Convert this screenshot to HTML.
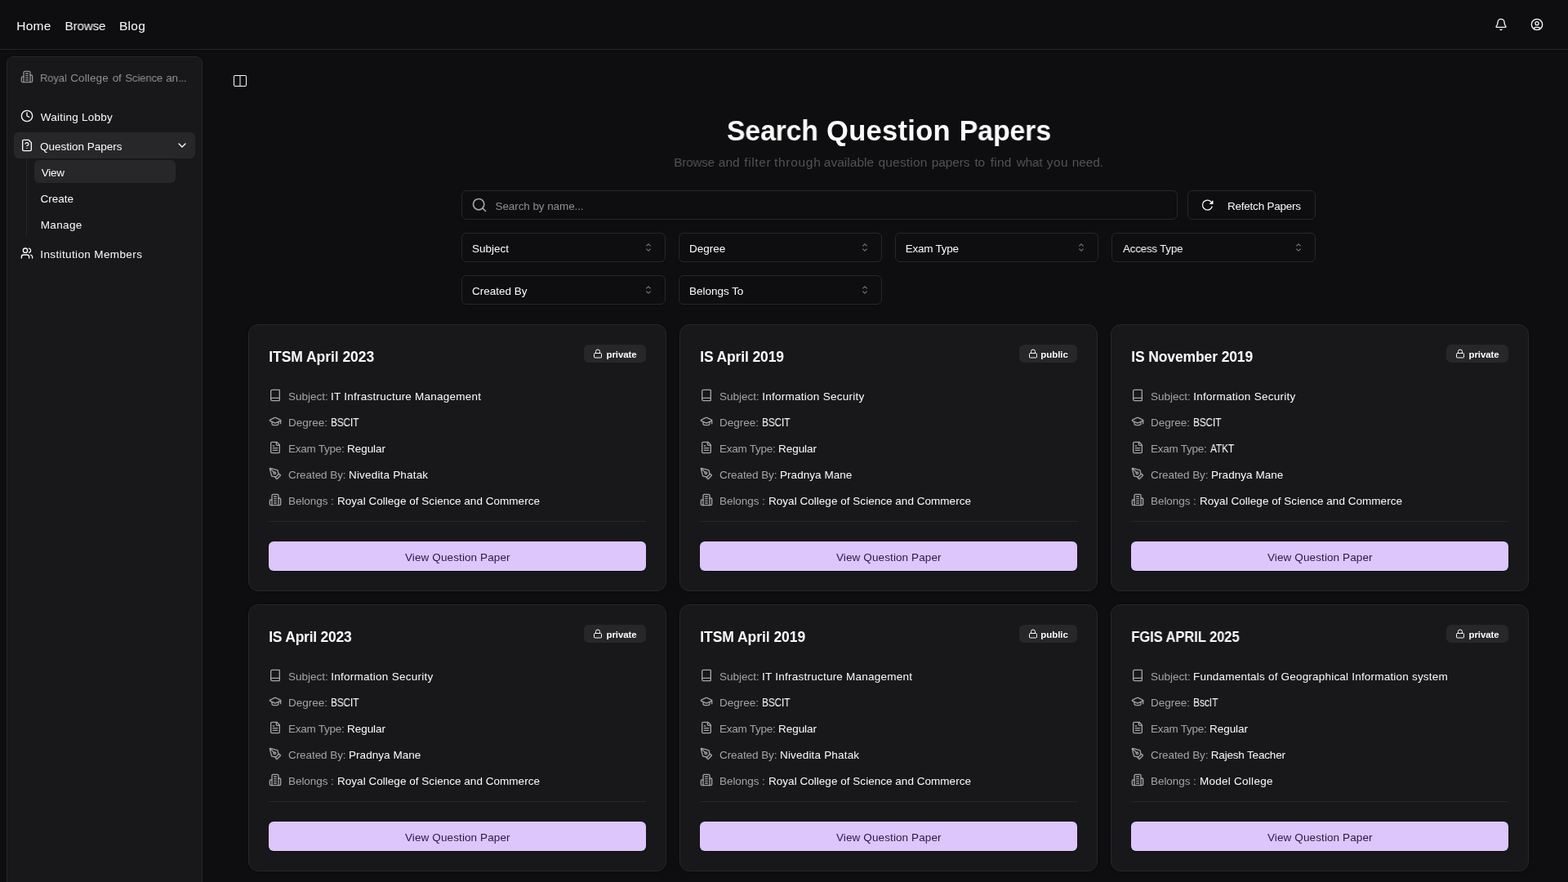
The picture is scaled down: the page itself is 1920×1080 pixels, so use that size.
<!DOCTYPE html>
<html lang="en">
<head>
<meta charset="utf-8">
<meta name="viewport" content="width=1920, initial-scale=1">
<title>Search Question Papers</title>
<style>
*{box-sizing:border-box;margin:0;padding:0}
html,body{width:1920px;height:1080px;overflow:hidden;background:#0e0e10;color:#fafafa;font-family:"Liberation Sans", Arial, Helvetica, sans-serif;-webkit-font-smoothing:antialiased}
ul{list-style:none}
a{text-decoration:none}
button{font:inherit;color:inherit;background:none;border:0;text-align:left;cursor:pointer}
.t{position:absolute;white-space:pre;line-height:30px;font-weight:400;display:block;will-change:transform;transform-origin:0 50%}
.ic{position:absolute;display:block}
.w{font-size:0;line-height:0}
.topbar{position:absolute;left:0;top:0;width:1920px;height:61px;border-bottom:1px solid #27272a;background:#0e0e10;box-shadow:0 1px 2px rgba(0,0,0,.35)}
.sidebar{position:absolute;width:240px;height:1030px;border:1px solid #27272a;border-radius:8px;background:#18181b;box-shadow:0 1px 3px rgba(0,0,0,.35)}
.sb-active{position:absolute;border-radius:6px;background:#27272a}
.sb-rail{position:absolute;width:1px;background:#27272a}
.toggle{position:absolute;width:28px;height:28px;border-radius:6px;color:#fafafa}
.field{position:absolute;height:36px;border:1px solid #27272a;border-radius:6px;background:transparent;box-shadow:0 1px 2px rgba(0,0,0,.05)}
.card{position:absolute;width:512px;height:327px;border:1px solid #27272a;border-radius:12px;background:#18181b;box-shadow:0 1px 3px rgba(0,0,0,.3)}
.badge{position:absolute;height:22px;border-radius:6px;background:#27272a}
.rule{position:absolute;height:1px;background:#27272a}
.cta{position:absolute;height:36px;border-radius:6px;background:#dcc6fc;box-shadow:0 1px 2px rgba(0,0,0,.3)}
</style>
</head>
<body>
<header class="topbar">
<nav class="nav"><a class="t" style="left:20px;top:17px;font-size:15.5px;letter-spacing:0.28px;color:#fafafa;padding-left:0.25px">Home</a> <a class="t" style="left:79px;top:17px;font-size:15.5px;letter-spacing:-0.15px;color:#fafafa;padding-left:0.5px;transform:scaleX(0.9817)">Browse</a> <a class="t" style="left:146px;top:17px;font-size:15.5px;letter-spacing:0.25px;color:#fafafa">Blog</a>
</nav>
<div class="actions"><svg class="ic" style="left:1830px;top:22px;color:#fafafa;" width="16" height="16" viewBox="0 0 24 24" fill="none" stroke="currentColor" stroke-width="2" stroke-linecap="round" stroke-linejoin="round" aria-hidden="true"><path d="M10.268 21a2 2 0 0 0 3.464 0"/><path d="M3.262 15.326A1 1 0 0 0 4 17h16a1 1 0 0 0 .74-1.673C19.41 13.956 18 12.499 18 8A6 6 0 0 0 6 8c0 4.499-1.411 5.956-2.738 7.326"/></svg><svg class="ic" style="left:1874px;top:22px;color:#fafafa;" width="16" height="16" viewBox="0 0 24 24" fill="none" stroke="currentColor" stroke-width="2" stroke-linecap="round" stroke-linejoin="round" aria-hidden="true"><circle cx="12" cy="12" r="10"/><circle cx="12" cy="10" r="3"/><path d="M7 20.662V19a2 2 0 0 1 2-2h6a2 2 0 0 1 2 2v1.662"/></svg></div>
</header>
<aside class="sidebar" style="left:8px;top:69px">
<div class="sb-head"><svg class="ic" style="left:16px;top:16px;color:#8f8f8f;" width="16" height="16" viewBox="0 0 24 24" fill="none" stroke="currentColor" stroke-width="2" stroke-linecap="round" stroke-linejoin="round" aria-hidden="true"><path d="M6 22V4a2 2 0 0 1 2-2h8a2 2 0 0 1 2 2v18Z"/><path d="M6 12H4a2 2 0 0 0-2 2v6a2 2 0 0 0 2 2h2"/><path d="M18 9h2a2 2 0 0 1 2 2v9a2 2 0 0 1-2 2h-2"/><path d="M10 6h4"/><path d="M10 10h4"/><path d="M10 14h4"/><path d="M10 18h4"/></svg><span class="w"><span class="t" style="left:40px;top:11px;font-size:13.5px;letter-spacing:-0.15px;color:#8f8f8f;transform:scaleX(0.9645)">Royal</span> <span class="t" style="left:77px;top:11px;font-size:13.5px;letter-spacing:0.11px;color:#8f8f8f;padding-left:0.25px">College</span> <span class="t" style="left:128px;top:11px;font-size:13.5px;letter-spacing:-0.2px;color:#8f8f8f;padding-left:0.75px">of</span> <span class="t" style="left:144px;top:11px;font-size:13.5px;letter-spacing:-0.15px;color:#8f8f8f;padding-left:0.25px;transform:scaleX(0.9767)">Science</span> <span class="t" style="left:194px;top:11px;font-size:13.5px;letter-spacing:-0.15px;color:#8f8f8f;padding-left:0.25px;transform:scaleX(0.9844)">an</span><span class="t" style="left:209px;top:11px;font-size:13.5px;letter-spacing:-0.15px;color:#8f8f8f;padding-left:0.5px;transform:scaleX(0.9095)">...</span></span></div>
<ul class="sb-menu">
<li><svg class="ic" style="left:16px;top:64px;color:#fafafa;" width="16" height="16" viewBox="0 0 24 24" fill="none" stroke="currentColor" stroke-width="2" stroke-linecap="round" stroke-linejoin="round" aria-hidden="true"><circle cx="12" cy="12" r="10"/><path d="M12 6v6l4 2"/></svg><span class="t" style="left:40px;top:59px;font-size:13.5px;letter-spacing:0.25px;color:#fafafa;padding-left:0.75px">Waiting Lobby</span></li>
<li><div class="sb-active" style="left:8px;top:92px;width:222px;height:32px"></div><svg class="ic" style="left:16px;top:100px;color:#fafafa;" width="16" height="16" viewBox="0 0 24 24" fill="none" stroke="currentColor" stroke-width="2" stroke-linecap="round" stroke-linejoin="round" aria-hidden="true"><path d="M12 17h.01"/><path d="M15 2H6a2 2 0 0 0-2 2v16a2 2 0 0 0 2 2h12a2 2 0 0 0 2-2V7z"/><path d="M9.1 9a3 3 0 0 1 5.82 1c0 2-3 3-3 3"/></svg><span class="t" style="left:40px;top:95px;font-size:13.5px;letter-spacing:-0.01px;color:#fafafa">Question Papers</span><svg class="ic" style="left:206px;top:100px;color:#fafafa;" width="16" height="16" viewBox="0 0 24 24" fill="none" stroke="currentColor" stroke-width="2" stroke-linecap="round" stroke-linejoin="round" aria-hidden="true"><path d="m6 9 6 6 6-6"/></svg>
<ul class="sb-sub">
<li class="sb-rail" style="left:23px;top:124px;height:96px"></li>
<li><div class="sb-active" style="left:33px;top:126px;width:173px;height:28px"></div><span class="t" style="left:41px;top:127px;font-size:13.5px;letter-spacing:-0.29px;color:#fafafa;padding-left:0.75px">View</span></li>
<li><span class="t" style="left:40px;top:159px;font-size:13.5px;letter-spacing:0.01px;color:#fafafa;padding-left:0.5px">Create</span></li>
<li><span class="t" style="left:40px;top:191px;font-size:13.5px;letter-spacing:0.35px;color:#fafafa;padding-left:0.75px">Manage</span></li>
</ul></li>
<li><svg class="ic" style="left:16px;top:232px;color:#fafafa;" width="16" height="16" viewBox="0 0 24 24" fill="none" stroke="currentColor" stroke-width="2" stroke-linecap="round" stroke-linejoin="round" aria-hidden="true"><path d="M16 21v-2a4 4 0 0 0-4-4H6a4 4 0 0 0-4 4v2"/><circle cx="9" cy="7" r="4"/><path d="M22 21v-2a4 4 0 0 0-3-3.87"/><path d="M16 3.13a4 4 0 0 1 0 7.75"/></svg><span class="t" style="left:40px;top:227px;font-size:13.5px;letter-spacing:0.38px;color:#fafafa;padding-left:0.25px">Institution Members</span></li>
</ul>
</aside>
<main>
<button class="toggle" style="left:280px;top:85px"><svg class="ic" style="left:6px;top:6px" width="16" height="16" viewBox="0 0 16 16" aria-hidden="true"><path fill="currentColor" d="M0 3a2 2 0 0 1 2-2h12a2 2 0 0 1 2 2v10a2 2 0 0 1-2 2H2a2 2 0 0 1-2-2zm8.5-1v12H14a1 1 0 0 0 1-1V3a1 1 0 0 0-1-1zm-1 0H2a1 1 0 0 0-1 1v10a1 1 0 0 0 1 1h5.5z"/></svg></button>
<h1 class="w"><span class="t" style="left:890px;top:145px;font-size:34.5px;letter-spacing:-0.15px;color:#fafafa;transform:scaleX(0.9784);font-weight:700">Search</span> <span class="t" style="left:1012px;top:145px;font-size:34.5px;letter-spacing:0.296px;color:#fafafa;font-weight:700">Question</span> <span class="t" style="left:1174px;top:145px;font-size:34.5px;letter-spacing:-0.15px;color:#fafafa;padding-left:0.75px;transform:scaleX(0.9829);font-weight:700">Papers</span></h1>
<p class="w"><span class="t" style="left:825px;top:184px;font-size:15.5px;letter-spacing:-0.15px;color:#525257;padding-left:0.25px;transform:scaleX(0.9777)">Browse</span> <span class="t" style="left:879px;top:184px;font-size:15.5px;letter-spacing:0.02px;color:#525257;padding-left:0.75px">and</span> <span class="t" style="left:911px;top:184px;font-size:15.5px;letter-spacing:0.63px;color:#525257;padding-left:0.25px">filter</span> <span class="t" style="left:948px;top:184px;font-size:15.5px;letter-spacing:0.705px;color:#525257">through</span> <span class="t" style="left:1008px;top:184px;font-size:15.5px;letter-spacing:0.026px;color:#525257;padding-left:0.75px">available</span> <span class="t" style="left:1075px;top:184px;font-size:15.5px;letter-spacing:0.19px;color:#525257;padding-left:0.5px">question</span> <span class="t" style="left:1140px;top:184px;font-size:15.5px;letter-spacing:-0.15px;color:#525257;padding-left:0.75px">papers</span> <span class="t" style="left:1193px;top:184px;font-size:15.5px;letter-spacing:-0.2px;color:#525257;padding-left:0.5px">to</span> <span class="t" style="left:1212px;top:184px;font-size:15.5px;letter-spacing:0.25px;color:#525257;padding-left:0.75px">find</span> <span class="t" style="left:1244px;top:184px;font-size:15.5px;letter-spacing:-0.15px;color:#525257;padding-left:0.75px;transform:scaleX(0.9846)">what</span> <span class="t" style="left:1281px;top:184px;font-size:15.5px;letter-spacing:0.38px;color:#525257;padding-left:0.75px">you</span> <span class="t" style="left:1312px;top:184px;font-size:15.5px;letter-spacing:-0.16px;color:#525257;padding-left:0.75px">need.</span></p>
<div class="field" style="left:565px;top:233px;width:877px"><svg class="ic" style="left:11px;top:7px;color:#a3a3a3;" width="20" height="20" viewBox="0 0 24 24" fill="none" stroke="currentColor" stroke-width="2" stroke-linecap="round" stroke-linejoin="round" aria-hidden="true"><circle cx="11" cy="11" r="8"/><path d="m21 21-4.3-4.3"/></svg><span class="t" style="left:40px;top:4px;font-size:13.5px;letter-spacing:-0.09px;color:#8e8e8e;padding-left:0.5px">Search by name...</span></div>
<button class="field" style="left:1454px;top:233px;width:157px"><svg class="ic" style="left:16px;top:9px;color:#fafafa;" width="16" height="16" viewBox="0 0 512 512" aria-hidden="true"><path d="M400 148l-21.12-24.57A191.43 191.43 0 00240 64C134 64 48 150 48 256s86 192 192 192a192.09 192.09 0 00181.07-128" fill="none" stroke="currentColor" stroke-linecap="round" stroke-miterlimit="10" stroke-width="40"/><path fill="currentColor" d="M464 97.42V208a16 16 0 01-16 16H337.42c-14.26 0-21.4-17.23-11.32-27.31L436.69 86.1C446.77 76 464 83.16 464 97.42z"/></svg><span class="t" style="left:48px;top:4px;font-size:13.5px;letter-spacing:-0.23px;color:#fafafa">Refetch Papers</span></button>
<button class="field" style="left:565px;top:285px;width:250px"><span class="t" style="left:12px;top:4px;font-size:13.5px;letter-spacing:0.01px;color:#fafafa">Subject</span><svg class="ic" style="left:220px;top:9px;opacity:.5" width="16" height="16" viewBox="0 0 15 15" fill="none" aria-hidden="true"><path fill="currentColor" fill-rule="evenodd" clip-rule="evenodd" d="M4.93179 5.43179C4.75605 5.60753 4.75605 5.89245 4.93179 6.06819C5.10753 6.24392 5.39245 6.24392 5.56819 6.06819L7.49999 4.13638L9.43179 6.06819C9.60753 6.24392 9.89245 6.24392 10.0682 6.06819C10.2439 5.89245 10.2439 5.60753 10.0682 5.43179L7.81819 3.18179C7.73379 3.0974 7.61933 3.04999 7.49999 3.04999C7.38064 3.04999 7.26618 3.0974 7.18179 3.18179L4.93179 5.43179ZM10.0682 9.56819C10.2439 9.39245 10.2439 9.10753 10.0682 8.93179C9.89245 8.75606 9.60753 8.75606 9.43179 8.93179L7.49999 10.8636L5.56819 8.93179C5.39245 8.75606 5.10753 8.75606 4.93179 8.93179C4.75605 9.10753 4.75605 9.39245 4.93179 9.56819L7.18179 11.8182C7.35753 11.9939 7.64245 11.9939 7.81819 11.8182L10.0682 9.56819Z"/></svg></button>
<button class="field" style="left:831px;top:285px;width:249px"><span class="t" style="left:12px;top:4px;font-size:13.5px;letter-spacing:-0.01px;color:#fafafa">Degree</span><svg class="ic" style="left:219px;top:9px;opacity:.5" width="16" height="16" viewBox="0 0 15 15" fill="none" aria-hidden="true"><path fill="currentColor" fill-rule="evenodd" clip-rule="evenodd" d="M4.93179 5.43179C4.75605 5.60753 4.75605 5.89245 4.93179 6.06819C5.10753 6.24392 5.39245 6.24392 5.56819 6.06819L7.49999 4.13638L9.43179 6.06819C9.60753 6.24392 9.89245 6.24392 10.0682 6.06819C10.2439 5.89245 10.2439 5.60753 10.0682 5.43179L7.81819 3.18179C7.73379 3.0974 7.61933 3.04999 7.49999 3.04999C7.38064 3.04999 7.26618 3.0974 7.18179 3.18179L4.93179 5.43179ZM10.0682 9.56819C10.2439 9.39245 10.2439 9.10753 10.0682 8.93179C9.89245 8.75606 9.60753 8.75606 9.43179 8.93179L7.49999 10.8636L5.56819 8.93179C5.39245 8.75606 5.10753 8.75606 4.93179 8.93179C4.75605 9.10753 4.75605 9.39245 4.93179 9.56819L7.18179 11.8182C7.35753 11.9939 7.64245 11.9939 7.81819 11.8182L10.0682 9.56819Z"/></svg></button>
<button class="field" style="left:1096px;top:285px;width:249px"><span class="t" style="left:11px;top:4px;font-size:13.5px;letter-spacing:-0.241px;color:#fafafa;padding-left:0.75px">Exam Type</span><svg class="ic" style="left:219px;top:9px;opacity:.5" width="16" height="16" viewBox="0 0 15 15" fill="none" aria-hidden="true"><path fill="currentColor" fill-rule="evenodd" clip-rule="evenodd" d="M4.93179 5.43179C4.75605 5.60753 4.75605 5.89245 4.93179 6.06819C5.10753 6.24392 5.39245 6.24392 5.56819 6.06819L7.49999 4.13638L9.43179 6.06819C9.60753 6.24392 9.89245 6.24392 10.0682 6.06819C10.2439 5.89245 10.2439 5.60753 10.0682 5.43179L7.81819 3.18179C7.73379 3.0974 7.61933 3.04999 7.49999 3.04999C7.38064 3.04999 7.26618 3.0974 7.18179 3.18179L4.93179 5.43179ZM10.0682 9.56819C10.2439 9.39245 10.2439 9.10753 10.0682 8.93179C9.89245 8.75606 9.60753 8.75606 9.43179 8.93179L7.49999 10.8636L5.56819 8.93179C5.39245 8.75606 5.10753 8.75606 4.93179 8.93179C4.75605 9.10753 4.75605 9.39245 4.93179 9.56819L7.18179 11.8182C7.35753 11.9939 7.64245 11.9939 7.81819 11.8182L10.0682 9.56819Z"/></svg></button>
<button class="field" style="left:1361px;top:285px;width:250px"><span class="t" style="left:13px;top:4px;font-size:13.5px;letter-spacing:-0.15px;color:#fafafa;transform:scaleX(0.9826)">Access Type</span><svg class="ic" style="left:220px;top:9px;opacity:.5" width="16" height="16" viewBox="0 0 15 15" fill="none" aria-hidden="true"><path fill="currentColor" fill-rule="evenodd" clip-rule="evenodd" d="M4.93179 5.43179C4.75605 5.60753 4.75605 5.89245 4.93179 6.06819C5.10753 6.24392 5.39245 6.24392 5.56819 6.06819L7.49999 4.13638L9.43179 6.06819C9.60753 6.24392 9.89245 6.24392 10.0682 6.06819C10.2439 5.89245 10.2439 5.60753 10.0682 5.43179L7.81819 3.18179C7.73379 3.0974 7.61933 3.04999 7.49999 3.04999C7.38064 3.04999 7.26618 3.0974 7.18179 3.18179L4.93179 5.43179ZM10.0682 9.56819C10.2439 9.39245 10.2439 9.10753 10.0682 8.93179C9.89245 8.75606 9.60753 8.75606 9.43179 8.93179L7.49999 10.8636L5.56819 8.93179C5.39245 8.75606 5.10753 8.75606 4.93179 8.93179C4.75605 9.10753 4.75605 9.39245 4.93179 9.56819L7.18179 11.8182C7.35753 11.9939 7.64245 11.9939 7.81819 11.8182L10.0682 9.56819Z"/></svg></button>
<button class="field" style="left:565px;top:337px;width:250px"><span class="t" style="left:12px;top:4px;font-size:13.5px;letter-spacing:-0.01px;color:#fafafa">Created By</span><svg class="ic" style="left:220px;top:9px;opacity:.5" width="16" height="16" viewBox="0 0 15 15" fill="none" aria-hidden="true"><path fill="currentColor" fill-rule="evenodd" clip-rule="evenodd" d="M4.93179 5.43179C4.75605 5.60753 4.75605 5.89245 4.93179 6.06819C5.10753 6.24392 5.39245 6.24392 5.56819 6.06819L7.49999 4.13638L9.43179 6.06819C9.60753 6.24392 9.89245 6.24392 10.0682 6.06819C10.2439 5.89245 10.2439 5.60753 10.0682 5.43179L7.81819 3.18179C7.73379 3.0974 7.61933 3.04999 7.49999 3.04999C7.38064 3.04999 7.26618 3.0974 7.18179 3.18179L4.93179 5.43179ZM10.0682 9.56819C10.2439 9.39245 10.2439 9.10753 10.0682 8.93179C9.89245 8.75606 9.60753 8.75606 9.43179 8.93179L7.49999 10.8636L5.56819 8.93179C5.39245 8.75606 5.10753 8.75606 4.93179 8.93179C4.75605 9.10753 4.75605 9.39245 4.93179 9.56819L7.18179 11.8182C7.35753 11.9939 7.64245 11.9939 7.81819 11.8182L10.0682 9.56819Z"/></svg></button>
<button class="field" style="left:831px;top:337px;width:249px"><span class="t" style="left:12px;top:4px;font-size:13.5px;letter-spacing:-0.02px;color:#fafafa">Belongs To</span><svg class="ic" style="left:219px;top:9px;opacity:.5" width="16" height="16" viewBox="0 0 15 15" fill="none" aria-hidden="true"><path fill="currentColor" fill-rule="evenodd" clip-rule="evenodd" d="M4.93179 5.43179C4.75605 5.60753 4.75605 5.89245 4.93179 6.06819C5.10753 6.24392 5.39245 6.24392 5.56819 6.06819L7.49999 4.13638L9.43179 6.06819C9.60753 6.24392 9.89245 6.24392 10.0682 6.06819C10.2439 5.89245 10.2439 5.60753 10.0682 5.43179L7.81819 3.18179C7.73379 3.0974 7.61933 3.04999 7.49999 3.04999C7.38064 3.04999 7.26618 3.0974 7.18179 3.18179L4.93179 5.43179ZM10.0682 9.56819C10.2439 9.39245 10.2439 9.10753 10.0682 8.93179C9.89245 8.75606 9.60753 8.75606 9.43179 8.93179L7.49999 10.8636L5.56819 8.93179C5.39245 8.75606 5.10753 8.75606 4.93179 8.93179C4.75605 9.10753 4.75605 9.39245 4.93179 9.56819L7.18179 11.8182C7.35753 11.9939 7.64245 11.9939 7.81819 11.8182L10.0682 9.56819Z"/></svg></button>
<section class="grid">
<article class="card" style="left:304px;top:397px">
<h3 class="t" style="left:24px;top:24px;font-size:17.5px;letter-spacing:-0.05px;color:#fafafa;padding-left:0.25px;font-weight:700">ITSM April 2023</h3>
<div class="badge" style="left:410px;top:24px;width:76px"><svg class="ic" style="left:11px;top:5px;color:#fafafa;" width="12" height="12" viewBox="0 0 24 24" fill="none" stroke="currentColor" stroke-width="2" stroke-linecap="round" stroke-linejoin="round" aria-hidden="true"><rect width="18" height="11" x="3" y="11" rx="2" ry="2"/><path d="M7 11V7a5 5 0 0 1 10 0v4"/></svg><span class="t" style="left:27px;top:-3px;font-size:11.5px;letter-spacing:-0.085px;color:#fafafa;padding-left:0.5px;font-weight:700">private</span></div>
<ul class="meta">
<li><svg class="ic" style="left:24px;top:78px;color:#a3a3a3;" width="16" height="16" viewBox="0 0 24 24" fill="none" stroke="currentColor" stroke-width="2" stroke-linecap="round" stroke-linejoin="round" aria-hidden="true"><path d="M4 19.5v-15A2.5 2.5 0 0 1 6.5 2H19a1 1 0 0 1 1 1v18a1 1 0 0 1-1 1H6.5a1 1 0 0 1 0-5H20"/></svg><span class="t" style="left:48px;top:73px;font-size:13.5px;letter-spacing:0.006px;color:#a3a3a3">Subject:</span> <span class="t" style="left:100px;top:73px;font-size:13.5px;letter-spacing:0.24px;color:#fafafa">IT Infrastructure Management</span></li>
<li><svg class="ic" style="left:24px;top:110px;color:#a3a3a3;" width="16" height="16" viewBox="0 0 24 24" fill="none" stroke="currentColor" stroke-width="2" stroke-linecap="round" stroke-linejoin="round" aria-hidden="true"><path d="M21.42 10.922a1 1 0 0 0-.019-1.838L12.83 5.18a2 2 0 0 0-1.66 0L2.6 9.08a1 1 0 0 0 0 1.832l8.57 3.908a2 2 0 0 0 1.66 0z"/><path d="M22 10v6"/><path d="M6 12.5V16a6 3 0 0 0 12 0v-3.5"/></svg><span class="t" style="left:48px;top:105px;font-size:13.5px;letter-spacing:0.01px;color:#a3a3a3">Degree:</span> <span class="t" style="left:100px;top:105px;font-size:13.75px;letter-spacing:-0.15px;color:#fafafa;transform:scaleX(0.8633)">BSCIT</span></li>
<li><svg class="ic" style="left:24px;top:142px;color:#a3a3a3;" width="16" height="16" viewBox="0 0 24 24" fill="none" stroke="currentColor" stroke-width="2" stroke-linecap="round" stroke-linejoin="round" aria-hidden="true"><path d="M15 2H6a2 2 0 0 0-2 2v16a2 2 0 0 0 2 2h12a2 2 0 0 0 2-2V7Z"/><path d="M14 2v4a2 2 0 0 0 2 2h4"/><path d="M10 9H8"/><path d="M16 13H8"/><path d="M16 17H8"/></svg><span class="t" style="left:48px;top:137px;font-size:13.5px;letter-spacing:-0.25px;color:#a3a3a3">Exam Type:</span> <span class="t" style="left:120px;top:137px;font-size:13.5px;letter-spacing:-0.04px;color:#fafafa">Regular</span></li>
<li><svg class="ic" style="left:24px;top:174px;color:#a3a3a3;" width="16" height="16" viewBox="0 0 24 24" fill="none" stroke="currentColor" stroke-width="2" stroke-linecap="round" stroke-linejoin="round" aria-hidden="true"><path d="M15.707 21.293a1 1 0 0 1-1.414 0l-1.586-1.586a1 1 0 0 1 0-1.414l5.586-5.586a1 1 0 0 1 1.414 0l1.586 1.586a1 1 0 0 1 0 1.414z"/><path d="m18 13-1.375-6.874a1 1 0 0 0-.746-.776L3.235 2.028a1 1 0 0 0-1.207 1.207L5.35 15.879a1 1 0 0 0 .776.746L13 18"/><path d="m2.3 2.3 7.286 7.286"/><circle cx="11" cy="11" r="2"/></svg><span class="t" style="left:48px;top:169px;font-size:13.5px;letter-spacing:-0.07px;color:#a3a3a3">Created By:</span> <span class="t" style="left:122px;top:169px;font-size:13.5px;letter-spacing:0.18px;color:#fafafa">Nivedita Phatak</span></li>
<li><svg class="ic" style="left:24px;top:206px;color:#a3a3a3;" width="16" height="16" viewBox="0 0 24 24" fill="none" stroke="currentColor" stroke-width="2" stroke-linecap="round" stroke-linejoin="round" aria-hidden="true"><path d="M6 22V4a2 2 0 0 1 2-2h8a2 2 0 0 1 2 2v18Z"/><path d="M6 12H4a2 2 0 0 0-2 2v6a2 2 0 0 0 2 2h2"/><path d="M18 9h2a2 2 0 0 1 2 2v9a2 2 0 0 1-2 2h-2"/><path d="M10 6h4"/><path d="M10 10h4"/><path d="M10 14h4"/><path d="M10 18h4"/></svg><span class="t" style="left:48px;top:201px;font-size:13.5px;letter-spacing:-0.06px;color:#a3a3a3">Belongs :</span> <span class="t" style="left:108px;top:201px;font-size:13.5px;letter-spacing:0.03px;color:#fafafa">Royal College of Science and Commerce</span></li>
</ul>
<div class="rule" style="left:24px;top:240px;width:462px"></div>
<button class="cta" style="left:24px;top:265px;width:462px"><span class="t" style="left:167px;top:5px;font-size:13.5px;letter-spacing:0.11px;color:#2a1845">View Question Paper</span></button>
</article>
<article class="card" style="left:832px;top:397px">
<h3 class="t" style="left:24px;top:24px;font-size:17.5px;letter-spacing:-0.14px;color:#fafafa;padding-left:0.25px;font-weight:700">IS April 2019</h3>
<div class="badge" style="left:415px;top:24px;width:71px"><svg class="ic" style="left:11px;top:5px;color:#fafafa;" width="12" height="12" viewBox="0 0 24 24" fill="none" stroke="currentColor" stroke-width="2" stroke-linecap="round" stroke-linejoin="round" aria-hidden="true"><rect width="18" height="11" x="3" y="11" rx="2" ry="2"/><path d="M7 11V7a5 5 0 0 1 10 0v4"/></svg><span class="t" style="left:26px;top:-3px;font-size:11.5px;letter-spacing:-0.04px;color:#fafafa;padding-left:0.25px;font-weight:700">public</span></div>
<ul class="meta">
<li><svg class="ic" style="left:24px;top:78px;color:#a3a3a3;" width="16" height="16" viewBox="0 0 24 24" fill="none" stroke="currentColor" stroke-width="2" stroke-linecap="round" stroke-linejoin="round" aria-hidden="true"><path d="M4 19.5v-15A2.5 2.5 0 0 1 6.5 2H19a1 1 0 0 1 1 1v18a1 1 0 0 1-1 1H6.5a1 1 0 0 1 0-5H20"/></svg><span class="t" style="left:48px;top:73px;font-size:13.5px;letter-spacing:0.006px;color:#a3a3a3">Subject:</span> <span class="t" style="left:100px;top:73px;font-size:13.5px;letter-spacing:0.26px;color:#fafafa;padding-left:0.25px">Information Security</span></li>
<li><svg class="ic" style="left:24px;top:110px;color:#a3a3a3;" width="16" height="16" viewBox="0 0 24 24" fill="none" stroke="currentColor" stroke-width="2" stroke-linecap="round" stroke-linejoin="round" aria-hidden="true"><path d="M21.42 10.922a1 1 0 0 0-.019-1.838L12.83 5.18a2 2 0 0 0-1.66 0L2.6 9.08a1 1 0 0 0 0 1.832l8.57 3.908a2 2 0 0 0 1.66 0z"/><path d="M22 10v6"/><path d="M6 12.5V16a6 3 0 0 0 12 0v-3.5"/></svg><span class="t" style="left:48px;top:105px;font-size:13.5px;letter-spacing:0.01px;color:#a3a3a3">Degree:</span> <span class="t" style="left:100px;top:105px;font-size:13.75px;letter-spacing:-0.15px;color:#fafafa;transform:scaleX(0.8633)">BSCIT</span></li>
<li><svg class="ic" style="left:24px;top:142px;color:#a3a3a3;" width="16" height="16" viewBox="0 0 24 24" fill="none" stroke="currentColor" stroke-width="2" stroke-linecap="round" stroke-linejoin="round" aria-hidden="true"><path d="M15 2H6a2 2 0 0 0-2 2v16a2 2 0 0 0 2 2h12a2 2 0 0 0 2-2V7Z"/><path d="M14 2v4a2 2 0 0 0 2 2h4"/><path d="M10 9H8"/><path d="M16 13H8"/><path d="M16 17H8"/></svg><span class="t" style="left:48px;top:137px;font-size:13.5px;letter-spacing:-0.25px;color:#a3a3a3">Exam Type:</span> <span class="t" style="left:120px;top:137px;font-size:13.5px;letter-spacing:-0.04px;color:#fafafa">Regular</span></li>
<li><svg class="ic" style="left:24px;top:174px;color:#a3a3a3;" width="16" height="16" viewBox="0 0 24 24" fill="none" stroke="currentColor" stroke-width="2" stroke-linecap="round" stroke-linejoin="round" aria-hidden="true"><path d="M15.707 21.293a1 1 0 0 1-1.414 0l-1.586-1.586a1 1 0 0 1 0-1.414l5.586-5.586a1 1 0 0 1 1.414 0l1.586 1.586a1 1 0 0 1 0 1.414z"/><path d="m18 13-1.375-6.874a1 1 0 0 0-.746-.776L3.235 2.028a1 1 0 0 0-1.207 1.207L5.35 15.879a1 1 0 0 0 .776.746L13 18"/><path d="m2.3 2.3 7.286 7.286"/><circle cx="11" cy="11" r="2"/></svg><span class="t" style="left:48px;top:169px;font-size:13.5px;letter-spacing:-0.08px;color:#a3a3a3">Created By:</span> <span class="t" style="left:122px;top:169px;font-size:13.5px;letter-spacing:0.05px;color:#fafafa">Pradnya Mane</span></li>
<li><svg class="ic" style="left:24px;top:206px;color:#a3a3a3;" width="16" height="16" viewBox="0 0 24 24" fill="none" stroke="currentColor" stroke-width="2" stroke-linecap="round" stroke-linejoin="round" aria-hidden="true"><path d="M6 22V4a2 2 0 0 1 2-2h8a2 2 0 0 1 2 2v18Z"/><path d="M6 12H4a2 2 0 0 0-2 2v6a2 2 0 0 0 2 2h2"/><path d="M18 9h2a2 2 0 0 1 2 2v9a2 2 0 0 1-2 2h-2"/><path d="M10 6h4"/><path d="M10 10h4"/><path d="M10 14h4"/><path d="M10 18h4"/></svg><span class="t" style="left:48px;top:201px;font-size:13.5px;letter-spacing:-0.06px;color:#a3a3a3">Belongs :</span> <span class="t" style="left:108px;top:201px;font-size:13.5px;letter-spacing:0.03px;color:#fafafa">Royal College of Science and Commerce</span></li>
</ul>
<div class="rule" style="left:24px;top:240px;width:462px"></div>
<button class="cta" style="left:24px;top:265px;width:462px"><span class="t" style="left:167px;top:5px;font-size:13.5px;letter-spacing:0.11px;color:#2a1845">View Question Paper</span></button>
</article>
<article class="card" style="left:1360px;top:397px">
<h3 class="t" style="left:24px;top:24px;font-size:17.5px;letter-spacing:-0.122px;color:#fafafa;padding-left:0.25px;font-weight:700">IS November 2019</h3>
<div class="badge" style="left:410px;top:24px;width:76px"><svg class="ic" style="left:11px;top:5px;color:#fafafa;" width="12" height="12" viewBox="0 0 24 24" fill="none" stroke="currentColor" stroke-width="2" stroke-linecap="round" stroke-linejoin="round" aria-hidden="true"><rect width="18" height="11" x="3" y="11" rx="2" ry="2"/><path d="M7 11V7a5 5 0 0 1 10 0v4"/></svg><span class="t" style="left:27px;top:-3px;font-size:11.5px;letter-spacing:-0.085px;color:#fafafa;padding-left:0.5px;font-weight:700">private</span></div>
<ul class="meta">
<li><svg class="ic" style="left:24px;top:78px;color:#a3a3a3;" width="16" height="16" viewBox="0 0 24 24" fill="none" stroke="currentColor" stroke-width="2" stroke-linecap="round" stroke-linejoin="round" aria-hidden="true"><path d="M4 19.5v-15A2.5 2.5 0 0 1 6.5 2H19a1 1 0 0 1 1 1v18a1 1 0 0 1-1 1H6.5a1 1 0 0 1 0-5H20"/></svg><span class="t" style="left:48px;top:73px;font-size:13.5px;letter-spacing:0.006px;color:#a3a3a3">Subject:</span> <span class="t" style="left:100px;top:73px;font-size:13.5px;letter-spacing:0.26px;color:#fafafa;padding-left:0.25px">Information Security</span></li>
<li><svg class="ic" style="left:24px;top:110px;color:#a3a3a3;" width="16" height="16" viewBox="0 0 24 24" fill="none" stroke="currentColor" stroke-width="2" stroke-linecap="round" stroke-linejoin="round" aria-hidden="true"><path d="M21.42 10.922a1 1 0 0 0-.019-1.838L12.83 5.18a2 2 0 0 0-1.66 0L2.6 9.08a1 1 0 0 0 0 1.832l8.57 3.908a2 2 0 0 0 1.66 0z"/><path d="M22 10v6"/><path d="M6 12.5V16a6 3 0 0 0 12 0v-3.5"/></svg><span class="t" style="left:48px;top:105px;font-size:13.5px;letter-spacing:0.01px;color:#a3a3a3">Degree:</span> <span class="t" style="left:100px;top:105px;font-size:13.75px;letter-spacing:-0.15px;color:#fafafa;transform:scaleX(0.8633)">BSCIT</span></li>
<li><svg class="ic" style="left:24px;top:142px;color:#a3a3a3;" width="16" height="16" viewBox="0 0 24 24" fill="none" stroke="currentColor" stroke-width="2" stroke-linecap="round" stroke-linejoin="round" aria-hidden="true"><path d="M15 2H6a2 2 0 0 0-2 2v16a2 2 0 0 0 2 2h12a2 2 0 0 0 2-2V7Z"/><path d="M14 2v4a2 2 0 0 0 2 2h4"/><path d="M10 9H8"/><path d="M16 13H8"/><path d="M16 17H8"/></svg><span class="t" style="left:48px;top:137px;font-size:13.5px;letter-spacing:-0.25px;color:#a3a3a3">Exam Type:</span> <span class="t" style="left:121px;top:137px;font-size:13.75px;letter-spacing:-0.15px;color:#fafafa;transform:scaleX(0.8659)">ATKT</span></li>
<li><svg class="ic" style="left:24px;top:174px;color:#a3a3a3;" width="16" height="16" viewBox="0 0 24 24" fill="none" stroke="currentColor" stroke-width="2" stroke-linecap="round" stroke-linejoin="round" aria-hidden="true"><path d="M15.707 21.293a1 1 0 0 1-1.414 0l-1.586-1.586a1 1 0 0 1 0-1.414l5.586-5.586a1 1 0 0 1 1.414 0l1.586 1.586a1 1 0 0 1 0 1.414z"/><path d="m18 13-1.375-6.874a1 1 0 0 0-.746-.776L3.235 2.028a1 1 0 0 0-1.207 1.207L5.35 15.879a1 1 0 0 0 .776.746L13 18"/><path d="m2.3 2.3 7.286 7.286"/><circle cx="11" cy="11" r="2"/></svg><span class="t" style="left:48px;top:169px;font-size:13.5px;letter-spacing:-0.08px;color:#a3a3a3">Created By:</span> <span class="t" style="left:122px;top:169px;font-size:13.5px;letter-spacing:0.05px;color:#fafafa">Pradnya Mane</span></li>
<li><svg class="ic" style="left:24px;top:206px;color:#a3a3a3;" width="16" height="16" viewBox="0 0 24 24" fill="none" stroke="currentColor" stroke-width="2" stroke-linecap="round" stroke-linejoin="round" aria-hidden="true"><path d="M6 22V4a2 2 0 0 1 2-2h8a2 2 0 0 1 2 2v18Z"/><path d="M6 12H4a2 2 0 0 0-2 2v6a2 2 0 0 0 2 2h2"/><path d="M18 9h2a2 2 0 0 1 2 2v9a2 2 0 0 1-2 2h-2"/><path d="M10 6h4"/><path d="M10 10h4"/><path d="M10 14h4"/><path d="M10 18h4"/></svg><span class="t" style="left:48px;top:201px;font-size:13.5px;letter-spacing:-0.06px;color:#a3a3a3">Belongs :</span> <span class="t" style="left:108px;top:201px;font-size:13.5px;letter-spacing:0.03px;color:#fafafa">Royal College of Science and Commerce</span></li>
</ul>
<div class="rule" style="left:24px;top:240px;width:462px"></div>
<button class="cta" style="left:24px;top:265px;width:462px"><span class="t" style="left:167px;top:5px;font-size:13.5px;letter-spacing:0.11px;color:#2a1845">View Question Paper</span></button>
</article>
<article class="card" style="left:304px;top:740px">
<h3 class="t" style="left:24px;top:24px;font-size:17.5px;letter-spacing:-0.24px;color:#fafafa;padding-left:0.25px;font-weight:700">IS April 2023</h3>
<div class="badge" style="left:410px;top:24px;width:76px"><svg class="ic" style="left:11px;top:5px;color:#fafafa;" width="12" height="12" viewBox="0 0 24 24" fill="none" stroke="currentColor" stroke-width="2" stroke-linecap="round" stroke-linejoin="round" aria-hidden="true"><rect width="18" height="11" x="3" y="11" rx="2" ry="2"/><path d="M7 11V7a5 5 0 0 1 10 0v4"/></svg><span class="t" style="left:27px;top:-3px;font-size:11.5px;letter-spacing:-0.085px;color:#fafafa;padding-left:0.5px;font-weight:700">private</span></div>
<ul class="meta">
<li><svg class="ic" style="left:24px;top:78px;color:#a3a3a3;" width="16" height="16" viewBox="0 0 24 24" fill="none" stroke="currentColor" stroke-width="2" stroke-linecap="round" stroke-linejoin="round" aria-hidden="true"><path d="M4 19.5v-15A2.5 2.5 0 0 1 6.5 2H19a1 1 0 0 1 1 1v18a1 1 0 0 1-1 1H6.5a1 1 0 0 1 0-5H20"/></svg><span class="t" style="left:48px;top:73px;font-size:13.5px;letter-spacing:0.006px;color:#a3a3a3">Subject:</span> <span class="t" style="left:100px;top:73px;font-size:13.5px;letter-spacing:0.26px;color:#fafafa;padding-left:0.25px">Information Security</span></li>
<li><svg class="ic" style="left:24px;top:110px;color:#a3a3a3;" width="16" height="16" viewBox="0 0 24 24" fill="none" stroke="currentColor" stroke-width="2" stroke-linecap="round" stroke-linejoin="round" aria-hidden="true"><path d="M21.42 10.922a1 1 0 0 0-.019-1.838L12.83 5.18a2 2 0 0 0-1.66 0L2.6 9.08a1 1 0 0 0 0 1.832l8.57 3.908a2 2 0 0 0 1.66 0z"/><path d="M22 10v6"/><path d="M6 12.5V16a6 3 0 0 0 12 0v-3.5"/></svg><span class="t" style="left:48px;top:105px;font-size:13.5px;letter-spacing:0.01px;color:#a3a3a3">Degree:</span> <span class="t" style="left:100px;top:105px;font-size:13.75px;letter-spacing:-0.15px;color:#fafafa;transform:scaleX(0.8633)">BSCIT</span></li>
<li><svg class="ic" style="left:24px;top:142px;color:#a3a3a3;" width="16" height="16" viewBox="0 0 24 24" fill="none" stroke="currentColor" stroke-width="2" stroke-linecap="round" stroke-linejoin="round" aria-hidden="true"><path d="M15 2H6a2 2 0 0 0-2 2v16a2 2 0 0 0 2 2h12a2 2 0 0 0 2-2V7Z"/><path d="M14 2v4a2 2 0 0 0 2 2h4"/><path d="M10 9H8"/><path d="M16 13H8"/><path d="M16 17H8"/></svg><span class="t" style="left:48px;top:137px;font-size:13.5px;letter-spacing:-0.25px;color:#a3a3a3">Exam Type:</span> <span class="t" style="left:120px;top:137px;font-size:13.5px;letter-spacing:-0.04px;color:#fafafa">Regular</span></li>
<li><svg class="ic" style="left:24px;top:174px;color:#a3a3a3;" width="16" height="16" viewBox="0 0 24 24" fill="none" stroke="currentColor" stroke-width="2" stroke-linecap="round" stroke-linejoin="round" aria-hidden="true"><path d="M15.707 21.293a1 1 0 0 1-1.414 0l-1.586-1.586a1 1 0 0 1 0-1.414l5.586-5.586a1 1 0 0 1 1.414 0l1.586 1.586a1 1 0 0 1 0 1.414z"/><path d="m18 13-1.375-6.874a1 1 0 0 0-.746-.776L3.235 2.028a1 1 0 0 0-1.207 1.207L5.35 15.879a1 1 0 0 0 .776.746L13 18"/><path d="m2.3 2.3 7.286 7.286"/><circle cx="11" cy="11" r="2"/></svg><span class="t" style="left:48px;top:169px;font-size:13.5px;letter-spacing:-0.07px;color:#a3a3a3">Created By:</span> <span class="t" style="left:122px;top:169px;font-size:13.5px;letter-spacing:0.05px;color:#fafafa">Pradnya Mane</span></li>
<li><svg class="ic" style="left:24px;top:206px;color:#a3a3a3;" width="16" height="16" viewBox="0 0 24 24" fill="none" stroke="currentColor" stroke-width="2" stroke-linecap="round" stroke-linejoin="round" aria-hidden="true"><path d="M6 22V4a2 2 0 0 1 2-2h8a2 2 0 0 1 2 2v18Z"/><path d="M6 12H4a2 2 0 0 0-2 2v6a2 2 0 0 0 2 2h2"/><path d="M18 9h2a2 2 0 0 1 2 2v9a2 2 0 0 1-2 2h-2"/><path d="M10 6h4"/><path d="M10 10h4"/><path d="M10 14h4"/><path d="M10 18h4"/></svg><span class="t" style="left:48px;top:201px;font-size:13.5px;letter-spacing:-0.06px;color:#a3a3a3">Belongs :</span> <span class="t" style="left:108px;top:201px;font-size:13.5px;letter-spacing:0.03px;color:#fafafa">Royal College of Science and Commerce</span></li>
</ul>
<div class="rule" style="left:24px;top:240px;width:462px"></div>
<button class="cta" style="left:24px;top:265px;width:462px"><span class="t" style="left:167px;top:5px;font-size:13.5px;letter-spacing:0.11px;color:#2a1845">View Question Paper</span></button>
</article>
<article class="card" style="left:832px;top:740px">
<h3 class="t" style="left:24px;top:24px;font-size:17.5px;letter-spacing:-0.05px;color:#fafafa;padding-left:0.25px;font-weight:700">ITSM April 2019</h3>
<div class="badge" style="left:415px;top:24px;width:71px"><svg class="ic" style="left:11px;top:5px;color:#fafafa;" width="12" height="12" viewBox="0 0 24 24" fill="none" stroke="currentColor" stroke-width="2" stroke-linecap="round" stroke-linejoin="round" aria-hidden="true"><rect width="18" height="11" x="3" y="11" rx="2" ry="2"/><path d="M7 11V7a5 5 0 0 1 10 0v4"/></svg><span class="t" style="left:26px;top:-3px;font-size:11.5px;letter-spacing:-0.04px;color:#fafafa;padding-left:0.25px;font-weight:700">public</span></div>
<ul class="meta">
<li><svg class="ic" style="left:24px;top:78px;color:#a3a3a3;" width="16" height="16" viewBox="0 0 24 24" fill="none" stroke="currentColor" stroke-width="2" stroke-linecap="round" stroke-linejoin="round" aria-hidden="true"><path d="M4 19.5v-15A2.5 2.5 0 0 1 6.5 2H19a1 1 0 0 1 1 1v18a1 1 0 0 1-1 1H6.5a1 1 0 0 1 0-5H20"/></svg><span class="t" style="left:48px;top:73px;font-size:13.5px;letter-spacing:0.006px;color:#a3a3a3">Subject:</span> <span class="t" style="left:100px;top:73px;font-size:13.5px;letter-spacing:0.24px;color:#fafafa">IT Infrastructure Management</span></li>
<li><svg class="ic" style="left:24px;top:110px;color:#a3a3a3;" width="16" height="16" viewBox="0 0 24 24" fill="none" stroke="currentColor" stroke-width="2" stroke-linecap="round" stroke-linejoin="round" aria-hidden="true"><path d="M21.42 10.922a1 1 0 0 0-.019-1.838L12.83 5.18a2 2 0 0 0-1.66 0L2.6 9.08a1 1 0 0 0 0 1.832l8.57 3.908a2 2 0 0 0 1.66 0z"/><path d="M22 10v6"/><path d="M6 12.5V16a6 3 0 0 0 12 0v-3.5"/></svg><span class="t" style="left:48px;top:105px;font-size:13.5px;letter-spacing:0.01px;color:#a3a3a3">Degree:</span> <span class="t" style="left:100px;top:105px;font-size:13.75px;letter-spacing:-0.15px;color:#fafafa;transform:scaleX(0.8633)">BSCIT</span></li>
<li><svg class="ic" style="left:24px;top:142px;color:#a3a3a3;" width="16" height="16" viewBox="0 0 24 24" fill="none" stroke="currentColor" stroke-width="2" stroke-linecap="round" stroke-linejoin="round" aria-hidden="true"><path d="M15 2H6a2 2 0 0 0-2 2v16a2 2 0 0 0 2 2h12a2 2 0 0 0 2-2V7Z"/><path d="M14 2v4a2 2 0 0 0 2 2h4"/><path d="M10 9H8"/><path d="M16 13H8"/><path d="M16 17H8"/></svg><span class="t" style="left:48px;top:137px;font-size:13.5px;letter-spacing:-0.25px;color:#a3a3a3">Exam Type:</span> <span class="t" style="left:120px;top:137px;font-size:13.5px;letter-spacing:-0.04px;color:#fafafa">Regular</span></li>
<li><svg class="ic" style="left:24px;top:174px;color:#a3a3a3;" width="16" height="16" viewBox="0 0 24 24" fill="none" stroke="currentColor" stroke-width="2" stroke-linecap="round" stroke-linejoin="round" aria-hidden="true"><path d="M15.707 21.293a1 1 0 0 1-1.414 0l-1.586-1.586a1 1 0 0 1 0-1.414l5.586-5.586a1 1 0 0 1 1.414 0l1.586 1.586a1 1 0 0 1 0 1.414z"/><path d="m18 13-1.375-6.874a1 1 0 0 0-.746-.776L3.235 2.028a1 1 0 0 0-1.207 1.207L5.35 15.879a1 1 0 0 0 .776.746L13 18"/><path d="m2.3 2.3 7.286 7.286"/><circle cx="11" cy="11" r="2"/></svg><span class="t" style="left:48px;top:169px;font-size:13.5px;letter-spacing:-0.08px;color:#a3a3a3">Created By:</span> <span class="t" style="left:122px;top:169px;font-size:13.5px;letter-spacing:0.18px;color:#fafafa">Nivedita Phatak</span></li>
<li><svg class="ic" style="left:24px;top:206px;color:#a3a3a3;" width="16" height="16" viewBox="0 0 24 24" fill="none" stroke="currentColor" stroke-width="2" stroke-linecap="round" stroke-linejoin="round" aria-hidden="true"><path d="M6 22V4a2 2 0 0 1 2-2h8a2 2 0 0 1 2 2v18Z"/><path d="M6 12H4a2 2 0 0 0-2 2v6a2 2 0 0 0 2 2h2"/><path d="M18 9h2a2 2 0 0 1 2 2v9a2 2 0 0 1-2 2h-2"/><path d="M10 6h4"/><path d="M10 10h4"/><path d="M10 14h4"/><path d="M10 18h4"/></svg><span class="t" style="left:48px;top:201px;font-size:13.5px;letter-spacing:-0.06px;color:#a3a3a3">Belongs :</span> <span class="t" style="left:108px;top:201px;font-size:13.5px;letter-spacing:0.03px;color:#fafafa">Royal College of Science and Commerce</span></li>
</ul>
<div class="rule" style="left:24px;top:240px;width:462px"></div>
<button class="cta" style="left:24px;top:265px;width:462px"><span class="t" style="left:167px;top:5px;font-size:13.5px;letter-spacing:0.11px;color:#2a1845">View Question Paper</span></button>
</article>
<article class="card" style="left:1360px;top:740px">
<h3 class="t" style="left:24px;top:24px;font-size:17.5px;letter-spacing:-0.15px;color:#fafafa;padding-left:0.25px;transform:scaleX(0.9532);font-weight:700">FGIS APRIL 2025</h3>
<div class="badge" style="left:410px;top:24px;width:76px"><svg class="ic" style="left:11px;top:5px;color:#fafafa;" width="12" height="12" viewBox="0 0 24 24" fill="none" stroke="currentColor" stroke-width="2" stroke-linecap="round" stroke-linejoin="round" aria-hidden="true"><rect width="18" height="11" x="3" y="11" rx="2" ry="2"/><path d="M7 11V7a5 5 0 0 1 10 0v4"/></svg><span class="t" style="left:27px;top:-3px;font-size:11.5px;letter-spacing:-0.085px;color:#fafafa;padding-left:0.5px;font-weight:700">private</span></div>
<ul class="meta">
<li><svg class="ic" style="left:24px;top:78px;color:#a3a3a3;" width="16" height="16" viewBox="0 0 24 24" fill="none" stroke="currentColor" stroke-width="2" stroke-linecap="round" stroke-linejoin="round" aria-hidden="true"><path d="M4 19.5v-15A2.5 2.5 0 0 1 6.5 2H19a1 1 0 0 1 1 1v18a1 1 0 0 1-1 1H6.5a1 1 0 0 1 0-5H20"/></svg><span class="t" style="left:48px;top:73px;font-size:13.5px;letter-spacing:0.006px;color:#a3a3a3">Subject:</span> <span class="t" style="left:100px;top:73px;font-size:13.5px;letter-spacing:0.202px;color:#fafafa">Fundamentals of Geographical Information system</span></li>
<li><svg class="ic" style="left:24px;top:110px;color:#a3a3a3;" width="16" height="16" viewBox="0 0 24 24" fill="none" stroke="currentColor" stroke-width="2" stroke-linecap="round" stroke-linejoin="round" aria-hidden="true"><path d="M21.42 10.922a1 1 0 0 0-.019-1.838L12.83 5.18a2 2 0 0 0-1.66 0L2.6 9.08a1 1 0 0 0 0 1.832l8.57 3.908a2 2 0 0 0 1.66 0z"/><path d="M22 10v6"/><path d="M6 12.5V16a6 3 0 0 0 12 0v-3.5"/></svg><span class="t" style="left:48px;top:105px;font-size:13.5px;letter-spacing:0.01px;color:#a3a3a3">Degree:</span> <span class="t" style="left:100px;top:105px;font-size:13.75px;letter-spacing:-0.15px;color:#fafafa;transform:scaleX(0.8817)">BscIT</span></li>
<li><svg class="ic" style="left:24px;top:142px;color:#a3a3a3;" width="16" height="16" viewBox="0 0 24 24" fill="none" stroke="currentColor" stroke-width="2" stroke-linecap="round" stroke-linejoin="round" aria-hidden="true"><path d="M15 2H6a2 2 0 0 0-2 2v16a2 2 0 0 0 2 2h12a2 2 0 0 0 2-2V7Z"/><path d="M14 2v4a2 2 0 0 0 2 2h4"/><path d="M10 9H8"/><path d="M16 13H8"/><path d="M16 17H8"/></svg><span class="t" style="left:48px;top:137px;font-size:13.5px;letter-spacing:-0.25px;color:#a3a3a3">Exam Type:</span> <span class="t" style="left:120px;top:137px;font-size:13.5px;letter-spacing:-0.04px;color:#fafafa">Regular</span></li>
<li><svg class="ic" style="left:24px;top:174px;color:#a3a3a3;" width="16" height="16" viewBox="0 0 24 24" fill="none" stroke="currentColor" stroke-width="2" stroke-linecap="round" stroke-linejoin="round" aria-hidden="true"><path d="M15.707 21.293a1 1 0 0 1-1.414 0l-1.586-1.586a1 1 0 0 1 0-1.414l5.586-5.586a1 1 0 0 1 1.414 0l1.586 1.586a1 1 0 0 1 0 1.414z"/><path d="m18 13-1.375-6.874a1 1 0 0 0-.746-.776L3.235 2.028a1 1 0 0 0-1.207 1.207L5.35 15.879a1 1 0 0 0 .776.746L13 18"/><path d="m2.3 2.3 7.286 7.286"/><circle cx="11" cy="11" r="2"/></svg><span class="t" style="left:48px;top:169px;font-size:13.5px;letter-spacing:-0.08px;color:#a3a3a3">Created By:</span> <span class="t" style="left:121px;top:169px;font-size:13.5px;letter-spacing:-0.18px;color:#fafafa;padding-left:0.75px">Rajesh Teacher</span></li>
<li><svg class="ic" style="left:24px;top:206px;color:#a3a3a3;" width="16" height="16" viewBox="0 0 24 24" fill="none" stroke="currentColor" stroke-width="2" stroke-linecap="round" stroke-linejoin="round" aria-hidden="true"><path d="M6 22V4a2 2 0 0 1 2-2h8a2 2 0 0 1 2 2v18Z"/><path d="M6 12H4a2 2 0 0 0-2 2v6a2 2 0 0 0 2 2h2"/><path d="M18 9h2a2 2 0 0 1 2 2v9a2 2 0 0 1-2 2h-2"/><path d="M10 6h4"/><path d="M10 10h4"/><path d="M10 14h4"/><path d="M10 18h4"/></svg><span class="t" style="left:48px;top:201px;font-size:13.5px;letter-spacing:-0.06px;color:#a3a3a3">Belongs :</span> <span class="t" style="left:108px;top:201px;font-size:13.5px;letter-spacing:0.26px;color:#fafafa">Model College</span></li>
</ul>
<div class="rule" style="left:24px;top:240px;width:462px"></div>
<button class="cta" style="left:24px;top:265px;width:462px"><span class="t" style="left:167px;top:5px;font-size:13.5px;letter-spacing:0.11px;color:#2a1845">View Question Paper</span></button>
</article>
</section>
</main>
</body>
</html>
